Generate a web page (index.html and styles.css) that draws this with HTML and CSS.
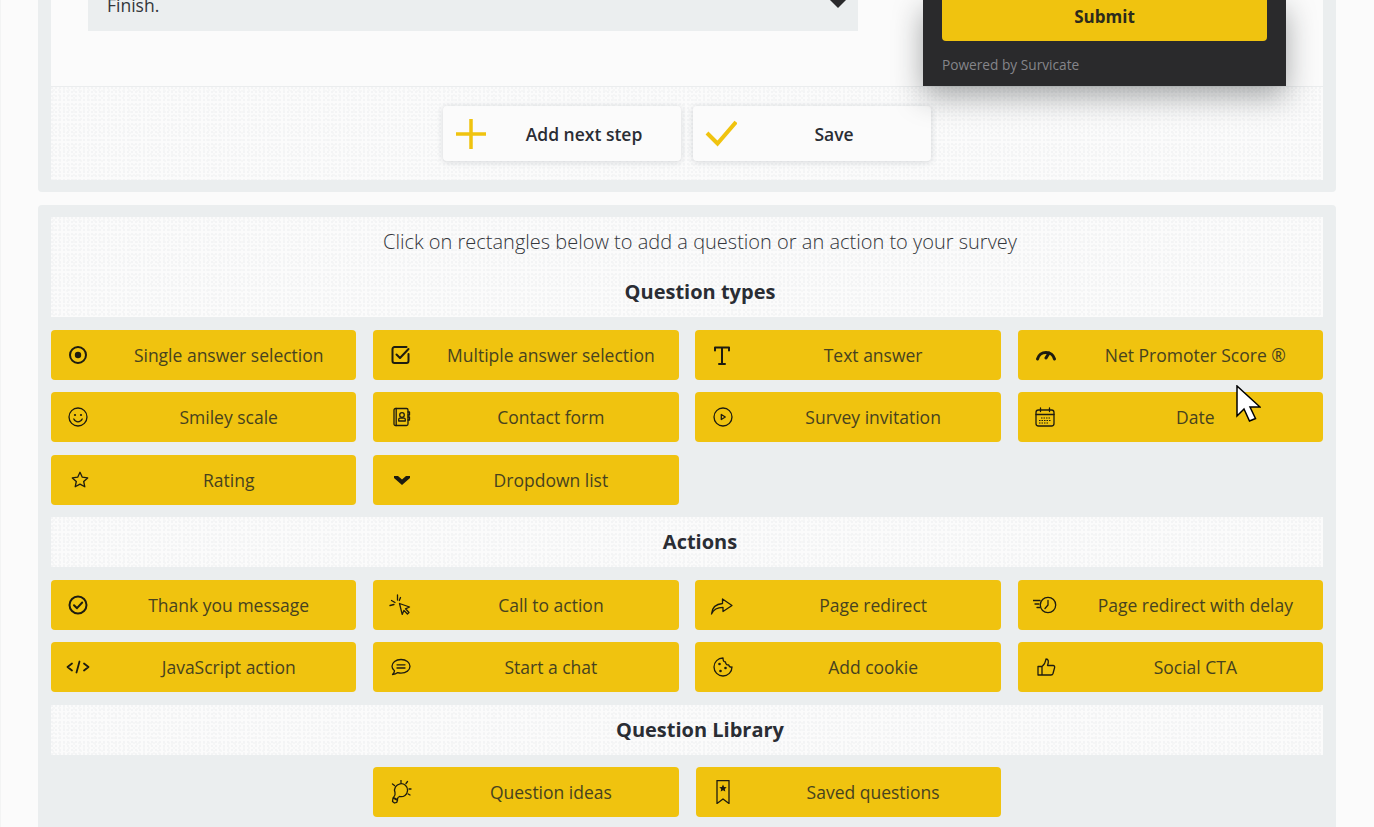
FILE: index.html
```html
<!DOCTYPE html>
<html lang="en">
<head>
<meta charset="utf-8">
<title>Survey builder</title>
<link rel="stylesheet" href="styles.css">
</head>
<body>
<main class="page">
  <section class="panel panel-first">
    <div class="step">
      <div class="select"><span class="select-text">Finish.</span>
        <svg class="select-arrow" viewBox="0 0 16 8"><path d="M0 0h16L8 8z"/></svg>
      </div>
      <div class="widget">
        <div class="widget-submit">Submit</div>
        <div class="widget-powered">Powered by Survicate</div>
      </div>
    </div>
    <div class="step-actions textured">
      <button class="action"><svg class="action-icon plus" viewBox="0 0 32 32"><path d="M16 1v30M1 16h30"/></svg><span class="action-label">Add next step</span></button>
      <button class="action"><svg class="action-icon" viewBox="0 0 32 32"><path d="M2 15l10.500 10.500L31 4"/></svg><span class="action-label">Save</span></button>
    </div>
  </section>

  <section class="panel panel-second">
    <div class="heading-block textured">
      <p class="intro">Click on rectangles below to add a question or an action to your survey</p>
      <h2 class="heading">Question types</h2>
    </div>
    <div class="tiles">
      <div class="tile"><span class="tile-ico"><svg viewBox="0 0 24 24"><circle cx="12" cy="12" r="8"/><circle class="fill" cx="12" cy="12" r="3.200"/></svg></span><span class="tile-text">Single answer selection</span></div>
      <div class="tile"><span class="tile-ico"><svg viewBox="-1 0 24 24"><path d="M19.500 11v7a2 2 0 0 1-2 2h-12a2 2 0 0 1-2-2V6a2 2 0 0 1 2-2h12"/><path d="M7.500 11.500l3.500 3.500 8.500-9"/></svg></span><span class="tile-text">Multiple answer selection</span></div>
      <div class="tile"><span class="tile-ico"><svg viewBox="0 0 24 24"><path d="M5 7.500V4.500h14v3M12 4.500V21M9 21h6"/></svg></span><span class="tile-text">Text answer</span></div>
      <div class="tile"><span class="tile-ico"><svg viewBox="-1 0 24 24"><path class="bold" d="M3.500 16a8.800 8.800 0 0 1 17 0"/><path class="bold" d="M12 15l3-5"/></svg></span><span class="tile-text">Net Promoter Score ®</span></div>
      <div class="tile"><span class="tile-ico"><svg class="thin" viewBox="0 0 24 24"><circle cx="12" cy="12" r="9"/><circle class="fill" cx="9" cy="10" r="1.100"/><circle class="fill" cx="15" cy="10" r="1.100"/><path d="M7.800 14c1 2 2.500 2.800 4.200 2.800s3.200-.8 4.200-2.800"/></svg></span><span class="tile-text">Smiley scale</span></div>
      <div class="tile"><span class="tile-ico"><svg class="thin" viewBox="-1 0 24 24"><rect x="5" y="3.500" width="14" height="17" rx="1.500"/><path d="M7.200 3.500v17"/><circle cx="13" cy="10" r="2.300"/><path d="M9.700 16v-1.500q0-1.300 1.300-1.300h4q1.300 0 1.300 1.300V16zM19 7h1.500v3H19M19 12h1.500v3H19"/></svg></span><span class="tile-text">Contact form</span></div>
      <div class="tile"><span class="tile-ico"><svg class="thin" viewBox="-1 0 24 24"><circle cx="12" cy="12" r="9"/><path d="M10.300 9.500l4 2.500-4 2.500z"/></svg></span><span class="tile-text">Survey invitation</span></div>
      <div class="tile"><span class="tile-ico"><svg class="thin" viewBox="0 0 24 24"><rect x="3" y="5" width="18" height="16" rx="2.500"/><path d="M3 9.500h18M7.500 3v3.500M16.500 3v3.500"/><path class="dash" d="M8 13h10M6 15.500h12M6 18h10"/></svg></span><span class="tile-text">Date</span></div>
      <div class="tile"><span class="tile-ico"><svg class="thin" viewBox="-2 0 24 24"><path d="M12 4.300l2.300 4.900 5.400.7-4 3.600 1.100 5.300-4.800-2.700-4.800 2.700 1.100-5.300-4-3.600 5.400-.7z"/></svg></span><span class="tile-text">Rating</span></div>
      <div class="tile"><span class="tile-ico"><svg viewBox="0 0 24 24"><path class="fill" d="M6 8h4l4 3.500L18 8h4v2l-8 7-8-7z"/></svg></span><span class="tile-text">Dropdown list</span></div>
    </div>

    <h2 class="heading textured heading-solo">Actions</h2>
    <div class="tiles">
      <div class="tile"><span class="tile-ico"><svg viewBox="0 0 24 24"><circle cx="12" cy="12" r="8.500"/><path d="M8 12.200l3 3 5.200-5.700"/></svg></span><span class="tile-text">Thank you message</span></div>
      <div class="tile"><span class="tile-ico"><svg class="thin" viewBox="0 0 24 24"><path d="M11.500 10.500l10 3.500-4 1.800 3.500 3.700-1.600 1.500-3.500-3.600-1.700 4z"/><path d="M9.500 2v5M3.500 7.500l3.500 2M2 12.500l4-1M12.500 4.500l-1.200 3"/></svg></span><span class="tile-text">Call to action</span></div>
      <div class="tile"><span class="tile-ico"><svg class="thin" viewBox="0 0 24 24"><path d="M1.500 21c.5-6 4.500-10 11-10.500V6l9.500 6.500-9 6v-4.200c-5 0-9.500 2-11.500 6.700z"/></svg></span><span class="tile-text">Page redirect</span></div>
      <div class="tile"><span class="tile-ico"><svg class="thin" viewBox="0 0 24 24"><circle cx="15" cy="12" r="7.700"/><path d="M15 7.500V12l-3 3.500M0 7.500h7M2 11h4M4 14.500h3"/></svg></span><span class="tile-text">Page redirect with delay</span></div>
      <div class="tile"><span class="tile-ico"><svg class="code" viewBox="0 0 24 24"><path d="M6 8.500L1.500 12 6 15.500M18 8.500l4.500 3.500-4.500 3.500M13.500 6.500l-3 11"/></svg></span><span class="tile-text">JavaScript action</span></div>
      <div class="tile"><span class="tile-ico"><svg class="thin" viewBox="-1 0 24 24"><path d="M12 4.500c5.200 0 9 3 9 6.800s-3.800 6.800-9 6.800c-1.200 0-2.200-.2-3.200-.5-1.200 1-3 1.900-5.300 1.900 1.300-1.200 2-2.400 2-3.700-1.700-1.200-2.500-2.800-2.500-4.500 0-3.800 3.800-6.800 9-6.800z"/><path d="M8 9.800h8M8 13h8"/></svg></span><span class="tile-text">Start a chat</span></div>
      <div class="tile"><span class="tile-ico"><svg class="thin" viewBox="-1 0 24 24"><path d="M12 3a9 9 0 1 0 9 9c-1.800.3-3-.6-3.300-2.200C15.800 10 14.500 8.800 14.500 7 13 7 12 5 12 3z"/><circle class="fill" cx="8.500" cy="9" r="1.300"/><circle class="fill" cx="14.500" cy="13" r="1.300"/><circle class="fill" cx="9.500" cy="16" r="1.300"/></svg></span><span class="tile-text">Add cookie</span></div>
      <div class="tile"><span class="tile-ico"><svg class="thin" viewBox="-1 0 24 24"><path d="M8 11.500h-4v8.500h4zM8 11.500c2-1.500 3.500-4 4-7.500 2.500 0 3 2.500 1.500 6.500h5.500c1.500 0 2 1.200 1.500 2.500l-1.500 5.500c-.3 1-1 1.500-2 1.500H8"/></svg></span><span class="tile-text">Social CTA</span></div>
    </div>

    <h2 class="heading textured heading-solo">Question Library</h2>
    <div class="tiles-center">
      <div class="tile"><span class="tile-ico"><svg class="thin" viewBox="0 0 24 24"><path d="M7 12.500A6.500 6.500 0 1 1 11.500 16.500C10 17 9.500 18 9.500 19.500L5.500 17.500C7 16 7.500 14.500 7 12.500z"/><path d="M5 18l4.500 2.300-.7 2-2.300.7-2-1.500zM13 0v2.500M19.500 1.500l-1.500 2M4.500 4l2 1.500M23 9h-2M22 15l-1.800-1"/></svg></span><span class="tile-text">Question ideas</span></div>
      <div class="tile"><span class="tile-ico"><svg class="thin" viewBox="0 0 24 24"><path d="M6 .5h12v23l-6-4.500L6 23.500z"/><path class="fill" d="M12 4.500l1.100 2.400 2.600.3-1.900 1.800.5 2.600-2.300-1.300-2.300 1.300.5-2.600-1.900-1.800 2.600-.3z"/></svg></span><span class="tile-text">Saved questions</span></div>
    </div>
  </section>
</main>
<svg class="cursor" viewBox="0 0 25 37"><path d="M1 1v30l7-7 5.500 12 6-2.500L14 22h10z"/></svg>
</body>
</html>
```
FILE: styles.css
```css
* { box-sizing: border-box; }
html, body { margin: 0; height: 827px; overflow: hidden; }
body {
  background: #fbfbfb;
  border-left: 1px solid #f3f4f4;
  font-family: "Open Sans", "Noto Sans", sans-serif;
  color: #2a2d34;
  position: relative;
}
.page { margin: 0 38px 0 37px; display: flex; flex-direction: column; gap: 13px; }
.panel { background: #ebeeef; padding: 0 13px; border-radius: 4px; }
.panel-first { padding-bottom: 12px; border-top-left-radius: 0; border-top-right-radius: 0; }
.panel-second { padding-top: 12px; height: 640px; }
.textured {
  background-color: #fbfbfb;
  background-image:
    radial-gradient(circle at 1px 1px, #f3f4f5 .7px, transparent 1px),
    radial-gradient(circle at 3px 3px, #f5f6f6 .7px, transparent 1px),
    radial-gradient(circle at 2px 4px, #f4f5f5 .6px, transparent 1px);
  background-size: 4px 4px, 5px 5px, 7px 7px;
}
.step {
  position: relative;
  height: 87px;
  background: #fbfbfb;
  border-bottom: 1px solid #ebedee;
  padding-left: 37px;
}
.select {
  width: 770px;
  height: 31px;
  background: #ebeeef;
  padding: 0 12px 0 19px;
  display: flex;
  justify-content: space-between;
  align-items: flex-start;
  overflow: hidden;
}
.select-text { font-size: 17.500px; line-height: 22px; margin-top: -6px; color: #33363b; }
.select-arrow { width: 16px; height: 8px; fill: #2a2a2c; }
.widget {
  position: absolute;
  top: 0;
  right: 37px;
  width: 363px;
  height: 86px;
  background: #2a2a2c;
  padding: 0 19px;
  z-index: 2;
  box-shadow: 0 10px 30px rgba(20, 25, 30, .38);
}
.widget-submit {
  height: 41px;
  padding-top: 4px;
  background: #f0c30f;
  border-radius: 0 0 4px 4px;
  text-align: center;
  font-size: 17px;
  line-height: 26px;
  font-weight: 700;
  color: #2c2a1c;
}
.widget-powered { margin-top: 14px; font-size: 13.700px; line-height: 19px; color: #85858a; }
.step-actions {
  height: 93px;
  padding-top: 19px;
  display: flex;
  justify-content: center;
  gap: 12px;
}
.action {
  width: 238px;
  height: 55px;
  padding: 0;
  display: flex;
  align-items: center;
  border: 0;
  border-radius: 4px;
  background: #fbfbfb;
  box-shadow: 0 1px 6px rgba(60, 70, 80, .2);
  font: 600 17.500px "Open Sans", sans-serif;
  color: #2a2d34;
}
.action-icon {
  flex: none;
  width: 32px;
  height: 32px;
  margin-left: 12px;
  fill: none;
  stroke: #f0c30f;
  stroke-width: 4;
}
.action-icon.plus { stroke-width: 3.500; }
.action-label { flex: 1; text-align: center; }
.heading-block { height: 100px; padding-top: 10px; }
.intro {
  margin: 0;
  height: 30px;
  padding-left: 26px;
  text-align: center;
  font-size: 20px;
  line-height: 30px;
  font-weight: 300;
  color: #33363b;
}
.heading {
  margin: 20px 0 0;
  padding-left: 26px;
  text-align: center;
  font-size: 20px;
  line-height: 30px;
  font-weight: 700;
  color: #2a2d34;
}
.heading-solo { margin: 12.500px 0; height: 50px; line-height: 50px; }
.tiles {
  margin-top: 13px;
  display: grid;
  grid-template-columns: repeat(4, 1fr);
  gap: 12.400px 16.800px;
}
.heading-solo + .tiles { margin-top: 0; }
.tiles-center {
  display: flex;
  justify-content: center;
  gap: 17px;
}
.tiles-center .tile { width: 305.250px; }
.tile {
  height: 50px;
  display: flex;
  align-items: center;
  background: #f0c30f;
  border-radius: 4px;
  font-size: 17.500px;
  color: #47421f;
}
.tile-ico { flex: none; width: 50px; padding-left: 15px; display: flex; }
.tile-ico svg {
  width: 24px;
  height: 24px;
  fill: none;
  stroke: #1e1c10;
  stroke-width: 2;
  stroke-linejoin: round;
  stroke-linecap: round;
}
.tile-ico svg.thin { stroke-width: 1.300; }
.tile-ico svg.code { stroke-width: 1.800; }
.tile-ico svg .fill { fill: #1e1c10; stroke: none; }
.tile-ico svg .bold { stroke-width: 3; }
.tile-ico svg .dash { stroke-width: 1; stroke-dasharray: 1.500 1; stroke-linecap: butt; }
.tile-text { flex: 1; text-align: center; white-space: nowrap; }
.cursor {
  position: absolute;
  left: 1235px;
  top: 385px;
  width: 25px;
  height: 37px;
  fill: #fff;
  stroke: #000;
  stroke-width: 1.500;
}
```
